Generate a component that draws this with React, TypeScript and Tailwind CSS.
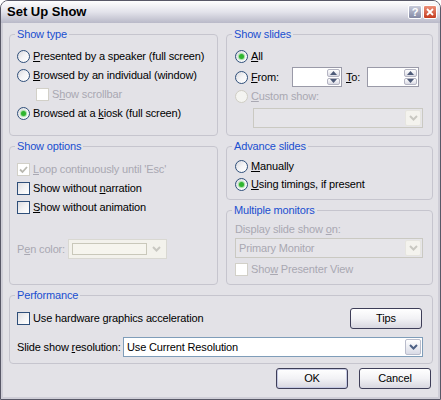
import React from "react";

// access key underline
const K = ({ children }: { children: React.ReactNode }) => (
  <span className="underline underline-offset-[1px]">{children}</span>
);

function Radio({ checked, disabled }: { checked?: boolean; disabled?: boolean }) {
  return (
    <span
      className={`w-[13px] h-[13px] rounded-full border flex items-center justify-center shrink-0 ${
        disabled
          ? "border-[#cfcdc4] bg-[#f4f4f1]"
          : "border-[#2f4f7a] bg-linear-to-br from-[#d9d9de] via-[#f4f4f6] to-white"
      }`}
    >
      {checked && (
        <span className="w-[5px] h-[5px] rounded-full bg-[#2fb52f] shadow-[0_0_1px_1px_#9edc9e]" />
      )}
    </span>
  );
}

function Check({ checked, disabled }: { checked?: boolean; disabled?: boolean }) {
  return (
    <span
      className={`w-[13px] h-[13px] border flex items-center justify-center shrink-0 ${
        disabled
          ? "border-[#d2d0c8] bg-white"
          : "border-[#2f4f7a] bg-linear-to-br from-[#dcdce0] via-[#f2f2f4] to-white"
      }`}
    >
      {checked && (
        <svg width="9" height="9" viewBox="0 0 9 9">
          <path d="M1 4.5 L3.5 7 L8 2" fill="none" stroke={disabled ? "#b9b8b0" : "#21a121"} strokeWidth="1.8" />
        </svg>
      )}
    </span>
  );
}

function Chevron({ disabled }: { disabled?: boolean }) {
  return (
    <svg width="9" height="6" viewBox="0 0 9 6">
      <path d="M1 1 L4.5 4.5 L8 1" fill="none" stroke={disabled ? "#c9c8c2" : "#4d6185"} strokeWidth="2" />
    </svg>
  );
}

function DropButton({ disabled }: { disabled?: boolean }) {
  return (
    <div
      className={`w-[16px] shrink-0 flex items-center justify-center rounded-[2px] border ${
        disabled
          ? "border-[#e6e5e0] bg-[#f4f3ee]"
          : "border-[#b9bccb] bg-linear-to-b from-white to-[#d9dbe6]"
      }`}
    >
      <Chevron disabled={disabled} />
    </div>
  );
}

function Spinner({ w }: { w: string }) {
  return (
    <div className={`flex h-[20px] ${w} border border-[#9a9aa8] bg-white`}>
      <div className="flex-1" />
      <div className="w-[15px] flex flex-col p-[1px] gap-[1px]">
        <div className="flex-1 rounded-[2px] border border-[#b4b4c2] bg-linear-to-b from-white to-[#dadae4] flex items-center justify-center">
          <svg width="7" height="4" viewBox="0 0 7 4">
            <path d="M0 4 L3.5 0 L7 4 Z" fill="#4d5a78" />
          </svg>
        </div>
        <div className="flex-1 rounded-[2px] border border-[#b4b4c2] bg-linear-to-b from-white to-[#dadae4] flex items-center justify-center">
          <svg width="7" height="4" viewBox="0 0 7 4">
            <path d="M0 0 L3.5 4 L7 0 Z" fill="#4d5a78" />
          </svg>
        </div>
      </div>
    </div>
  );
}

function Group({
  title,
  className,
  children,
}: {
  title: string;
  className: string;
  children: React.ReactNode;
}) {
  return (
    <fieldset className={`border border-[#c6c5ce] rounded-[4px] ${className}`}>
      <legend className="ml-[5px] px-[2px] text-[#1a4fd0] leading-[13px]">{title}</legend>
      {children}
    </fieldset>
  );
}

function XpButton({ label, className = "" }: { label: React.ReactNode; className?: string }) {
  return (
    <button
      className={`w-[72px] h-[21px] rounded-[3px] border border-[#3e3e58] bg-linear-to-b from-white via-[#f2f2f5] to-[#d8d7e0] text-black text-[11px] leading-none flex items-center justify-center ${className}`}
    >
      {label}
    </button>
  );
}

export default function App() {
  const gray = "text-[#a9a8b2]";

  return (
    <div className="w-[441px] h-[400px] bg-white font-['Liberation_Sans',Arial,sans-serif] text-[11px] tracking-[-0.15px] text-black">
      <div className="w-full h-full flex flex-col rounded-t-[8px] border border-[#585867] overflow-hidden bg-[#e3e2e7]">
        {/* title bar */}
        <div className="h-[22px] shrink-0 flex items-center pl-[6px] pr-[3px] bg-linear-to-b from-[#fefefe] via-[#e3e3eb] to-[#b9b9c8]">
          <span className="font-bold text-[13px] tracking-normal">Set Up Show</span>
          <div className="ml-auto flex gap-[1px]">
            <div className="w-[14px] h-[14px] rounded-[2px] border border-white bg-linear-to-b from-[#c9ccda] to-[#8489a4] flex items-center justify-center text-white font-bold text-[11px] leading-none">
              ?
            </div>
            <div className="w-[14px] h-[14px] rounded-[2px] border border-white bg-linear-to-b from-[#ec8f78] to-[#c43a1c] flex items-center justify-center">
              <svg width="8" height="8" viewBox="0 0 8 8">
                <path d="M1 1 L7 7 M7 1 L1 7" stroke="white" strokeWidth="1.8" />
              </svg>
            </div>
          </div>
        </div>

        {/* body */}
        <div className="flex-1 border-x-2 border-b-2 border-[#cfced7] pl-[6px] pr-[5px] pt-[5px]">
          <div className="flex gap-[8px]">
            {/* left column */}
            <div className="w-[209px] flex flex-col gap-[4px]">
              <Group title="Show type" className="h-[108px]">
                <div className="pt-[6px] pl-[7px]">
                  <div className="h-[19px] flex items-center gap-[3px]">
                    <Radio />
                    <span><K>P</K>resented by a speaker (full screen)</span>
                  </div>
                  <div className="h-[19px] flex items-center gap-[3px]">
                    <Radio />
                    <span><K>B</K>rowsed by an individual (window)</span>
                  </div>
                  <div className="h-[19px] flex items-center gap-[3px] pl-[19px]">
                    <Check disabled />
                    <span className={gray}>S<K>h</K>ow scrollbar</span>
                  </div>
                  <div className="h-[19px] flex items-center gap-[3px]">
                    <Radio checked />
                    <span>Browsed at a <K>k</K>iosk (full screen)</span>
                  </div>
                </div>
              </Group>

              <Group title="Show options" className="h-[145px]">
                <div className="pt-[7px] pl-[7px]">
                  <div className="h-[19px] flex items-center gap-[3px]">
                    <Check checked disabled />
                    <span className={gray}><K>L</K>oop continuously until 'Esc'</span>
                  </div>
                  <div className="h-[19px] flex items-center gap-[3px]">
                    <Check />
                    <span>Show without <K>n</K>arration</span>
                  </div>
                  <div className="h-[19px] flex items-center gap-[3px]">
                    <Check />
                    <span><K>S</K>how without animation</span>
                  </div>
                  <div className="mt-[22px] h-[20px] flex items-center">
                    <span className={`w-[51px] ${gray}`}>P<K>e</K>n color:</span>
                    <div className="w-[99px] h-[20px] flex gap-[2px] p-[3px] border border-[#d9d8d2] bg-[#f3f2ec]">
                      <div className="flex-1 border border-[#c9c8ba] bg-[#f6f5ee]" />
                      <div className="w-[14px] flex items-center justify-center">
                        <Chevron disabled />
                      </div>
                    </div>
                  </div>
                </div>
              </Group>
            </div>

            {/* right column */}
            <div className="w-[207px] flex flex-col gap-[4px]">
              <Group title="Show slides" className="h-[108px]">
                <div className="pt-[6px] pl-[8px]">
                  <div className="h-[19px] flex items-center gap-[3px]">
                    <Radio checked />
                    <span><K>A</K>ll</span>
                  </div>
                  <div className="h-[22px] flex items-center">
                    <Radio />
                    <span className="w-[41px] ml-[3px]"><K>F</K>rom:</span>
                    <Spinner w="w-[50px]" />
                    <span className="w-[25px] pl-[4px]"><K>T</K>o:</span>
                    <Spinner w="w-[52px]" />
                  </div>
                  <div className="h-[17px] flex items-center gap-[3px]">
                    <Radio disabled />
                    <span className={gray}><K>C</K>ustom show:</span>
                  </div>
                  <div className="mt-[3px] ml-[18px] w-[170px] h-[20px] flex p-[1px] border border-[#cac9c2] bg-[#e6e5e9]">
                    <div className="flex-1" />
                    <DropButton disabled />
                  </div>
                </div>
              </Group>

              <Group title="Advance slides" className="h-[60px]">
                <div className="pt-[4px] pl-[8px]">
                  <div className="h-[18px] flex items-center gap-[3px]">
                    <Radio />
                    <span><K>M</K>anually</span>
                  </div>
                  <div className="h-[18px] flex items-center gap-[3px]">
                    <Radio checked />
                    <span><K>U</K>sing timings, if present</span>
                  </div>
                </div>
              </Group>

              <Group title="Multiple monitors" className="h-[81px]">
                <div className="pt-[5px] pl-[8px]">
                  <div className={`h-[14px] flex items-center ${gray}`}>
                    <span>Display slide show <K>o</K>n:</span>
                  </div>
                  <div className="mt-[2px] w-[188px] h-[20px] flex p-[1px] border border-[#cac9c2] bg-[#e6e5e9]">
                    <span className={`flex-1 flex items-center pl-[2px] ${gray}`}>Primary Monitor</span>
                    <DropButton disabled />
                  </div>
                  <div className="mt-[4px] h-[14px] flex items-center gap-[3px]">
                    <Check disabled />
                    <span className={gray}>Sho<K>w</K> Presenter View</span>
                  </div>
                </div>
              </Group>
            </div>
          </div>

          <Group title="Performance" className="mt-[4px] h-[75px]">
            <div className="pt-[5px] pl-[7px] pr-[9px]">
              <div className="h-[22px] flex items-center gap-[3px]">
                <Check />
                <span>Use hardware <K>g</K>raphics acceleration</span>
                <XpButton label="Tips" className="ml-auto mr-[1px]" />
              </div>
              <div className="mt-[8px] h-[20px] flex items-center">
                <span className="w-[106px]">Slide show <K>r</K>esolution:</span>
                <div className="flex-1 h-[20px] flex p-[1px] border border-[#7f9db9] bg-white">
                  <span className="flex-1 flex items-center pl-[2px]">Use Current Resolution</span>
                  <DropButton />
                </div>
              </div>
            </div>
          </Group>

          <div className="mt-[4px] flex justify-end gap-[11px] pr-[2px]">
            <XpButton label="OK" className="shadow-[inset_0_0_0_1px_#c4c8e2]" />
            <XpButton label="Cancel" />
          </div>
        </div>
      </div>
    </div>
  );
}
